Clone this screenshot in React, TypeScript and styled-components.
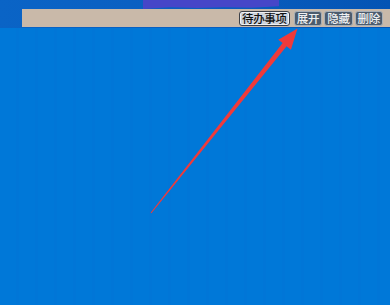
import React from "react";
import styled, { createGlobalStyle } from "styled-components";

const Global = createGlobalStyle`
  html, body { margin: 0; padding: 0; }
  body { width: 390px; height: 305px; overflow: hidden; background: #0078d8; }
`;

const Screen = styled.div`
  position: relative;
  width: 390px;
  height: 305px;
  display: flex;
  flex-direction: column;
  overflow: hidden;
  font-family: "Noto Sans CJK SC", "Noto Sans", sans-serif;
`;

const TopStrip = styled.div`
  display: flex;
  flex-direction: column;
  height: 28px;
  background: linear-gradient(90deg, #0a64c6 0%, #0a5ec0 50%, #0454b4 100%);
`;

const Blob = styled.div`
  margin-left: 143px;
  width: 136px;
  height: 9px;
  background: #4646c8;
  clip-path: polygon(0 0, 100% 0, 100% 70%, 80% 85%, 60% 80%, 40% 90%, 20% 80%, 0 100%);
`;

const Toolbar = styled.div`
  margin-left: 22px;
  height: 18px;
  background: #c9b9a9;
  display: flex;
  align-items: center;
  justify-content: flex-end;
  padding-right: 7px;
  gap: 2px;
`;

const Button = styled.div<{ $light?: boolean }>`
  flex-shrink: 0;
  white-space: nowrap;
  height: 15px;
  box-sizing: border-box;
  padding: 0 2px;
  margin-right: ${(p) => (p.$light ? "2px" : "0")};
  display: flex;
  align-items: center;
  justify-content: center;
  font-size: 11.5px;
  font-weight: 500;
  line-height: 11px;
  letter-spacing: -0.3px;
  border-radius: 3px;
  color: ${(p) => (p.$light ? "#111" : "#eef0f2")};
  background: ${(p) => (p.$light ? "#cdd3dc" : "#4c5c6e")};
  border: 1px solid ${(p) => (p.$light ? "#3c4048" : "#a8b0b8")};
  box-shadow: ${(p) => (p.$light ? "inset 0 0 0 1px #eef0f4" : "none")};
`;

const Desktop = styled.div`
  flex: 1;
  background: repeating-linear-gradient(
    90deg,
    #0078d8 0px,
    #0078d8 16px,
    #0176d7 16px,
    #0176d7 19px
  );
`;

const Arrow = styled.svg`
  position: absolute;
  left: 0;
  top: 0;
  pointer-events: none;
`;

export default function App() {
  return (
    <>
      <Global />
      <Screen>
        <TopStrip>
          <Blob />
          <Toolbar>
            <Button $light>待办事项</Button>
            <Button>展开</Button>
            <Button>隐藏</Button>
            <Button>删除</Button>
          </Toolbar>
        </TopStrip>
        <Desktop />
        <Arrow width="390" height="305" viewBox="0 0 390 305">
          <polygon
            fill="#f03a3a"
            points="150.6,212.7 282.6,43.1 278.3,39.7 297.5,28.5 290.9,49.7 286.6,46.2 151.4,213.3"
          />
        </Arrow>
      </Screen>
    </>
  );
}
